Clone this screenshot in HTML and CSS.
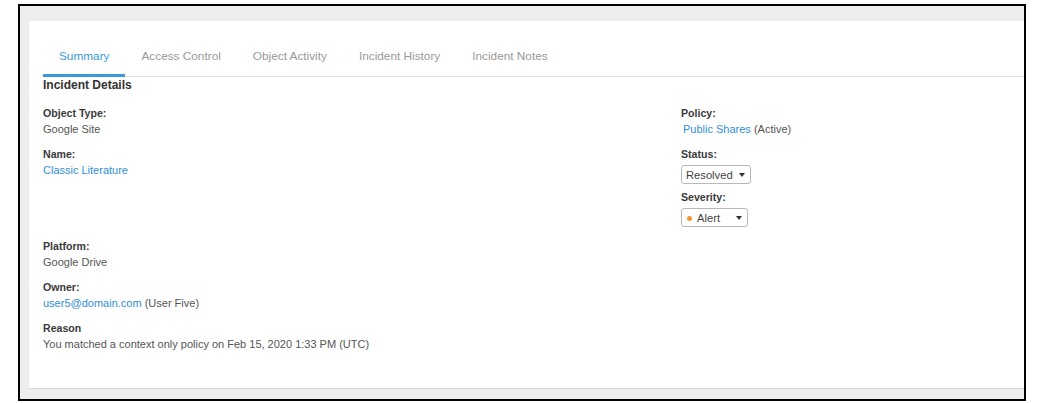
FILE: index.html
```html
<!DOCTYPE html>
<html lang="en">
<head>
    <meta charset="UTF-8">
    <title>Incident Details</title>
    <link rel="stylesheet" href="styles.css">
</head>
<body>
    <div class="frame">
        <div class="panel">
            <ul class="tabs">
                <li class="tab active">Summary</li>
                <li class="tab">Access Control</li>
                <li class="tab">Object Activity</li>
                <li class="tab">Incident History</li>
                <li class="tab">Incident Notes</li>
            </ul>
            <div class="content">
                <h3 class="section-title">Incident Details</h3>
                <div class="columns">
                    <div class="col">
                        <div class="field">
                            <div class="label">Object Type:</div>
                            <div class="value">Google Site</div>
                        </div>
                        <div class="field">
                            <div class="label">Name:</div>
                            <div class="value"><a href="#">Classic Literature</a></div>
                        </div>
                    </div>
                    <div class="col">
                        <div class="field">
                            <div class="label">Policy:</div>
                            <div class="value"><a href="#" class="policy-link">Public Shares</a> (Active)</div>
                        </div>
                        <div class="field field-select">
                            <div class="label">Status:</div>
                            <div class="dropdown status">
                                <span>Resolved</span>
                                <i class="caret"></i>
                            </div>
                        </div>
                        <div class="field field-select">
                            <div class="label">Severity:</div>
                            <div class="dropdown severity">
                                <span><i class="dot"></i>Alert</span>
                                <i class="caret"></i>
                            </div>
                        </div>
                    </div>
                </div>
                <div class="field">
                    <div class="label">Platform:</div>
                    <div class="value">Google Drive</div>
                </div>
                <div class="field">
                    <div class="label">Owner:</div>
                    <div class="value"><a href="#">user5@domain.com</a> (User Five)</div>
                </div>
                <div class="field">
                    <div class="label">Reason</div>
                    <div class="value">You matched a context only policy on Feb 15, 2020 1:33 PM (UTC)</div>
                </div>
            </div>
        </div>
    </div>
</body>
</html>
```

FILE: styles.css
```css
*{
    box-sizing: border-box;
}
html,
body {
    margin: 0;
    padding: 0;
    background: #fff;
    font-family: "Liberation Sans", Arial, sans-serif;
    color: #555;
}
.frame {
    margin: 4px 0 0 18px;
    width: 1008px;
    height: 397px;
    border: 2px solid #000;
    background: #eeeeee;
    padding: 15px 0 0 9px;
}
.panel {
    background: #fff;
    height: 367px;
    box-shadow: 0 1px 1px rgba(0,0,0,0.08);
}

/* tabs */
.tabs {
    list-style: none;
    margin: 0 0 0 14px;
    padding: 0;
    display: flex;
    border-bottom: 1px solid #e2e2e2;
}
.tab {
    font-size: 11.8px;
    line-height: 14px;
    padding: 28px 16px 11px;
    color: #999;
    border-bottom: 3px solid transparent;
    margin-bottom: -1px;
}
.tab.active {
    color: #3a9ad9;
    border-bottom-color: #3a9ad9;
}

.content {
    padding-left: 14px;
}
.section-title {
    margin: 0 0 12px;
    font-size: 12px;
    line-height: 16px;
    font-weight: bold;
    color: #333;
}

.columns {
    display: grid;
    grid-template-columns: 638px 1fr;
    margin-bottom: 11px;
}
.field {
    margin-bottom: 9px;
    font-size: 11px;
    line-height: 16px;
}
.col .field:last-child {
    margin-bottom: 0;
}
.label {
    font-weight: bold;
    font-size: 10.6px;
    color: #3a3a3a;
}
.value {
    color: #555;
}
a {
    color: #2f8fd8;
    text-decoration: none;
}
.policy-link {
    margin-left: 2px;
}

/* fake select */
.field-select {
    margin-bottom: 5px;
}
.dropdown {
    display: flex;
    align-items: center;
    justify-content: space-between;
    margin-top: 3px;
    height: 19px;
    border: 1px solid #b9b9b9;
    border-radius: 3px;
    padding: 0 5px 0 4px;
    font-size: 11.2px;
    color: #444;
}
.status {
    width: 70px;
}
.severity {
    width: 67px;
}
.dot {
    display: inline-block;
    width: 5px;
    height: 5px;
    border-radius: 50%;
    background: #f39237;
    margin: 0 5px 1px 1px;
    vertical-align: middle;
}
.caret {
    width: 0;
    height: 0;
    border-left: 3.5px solid transparent;
    border-right: 3.5px solid transparent;
    border-top: 4px solid #333;
}
```
